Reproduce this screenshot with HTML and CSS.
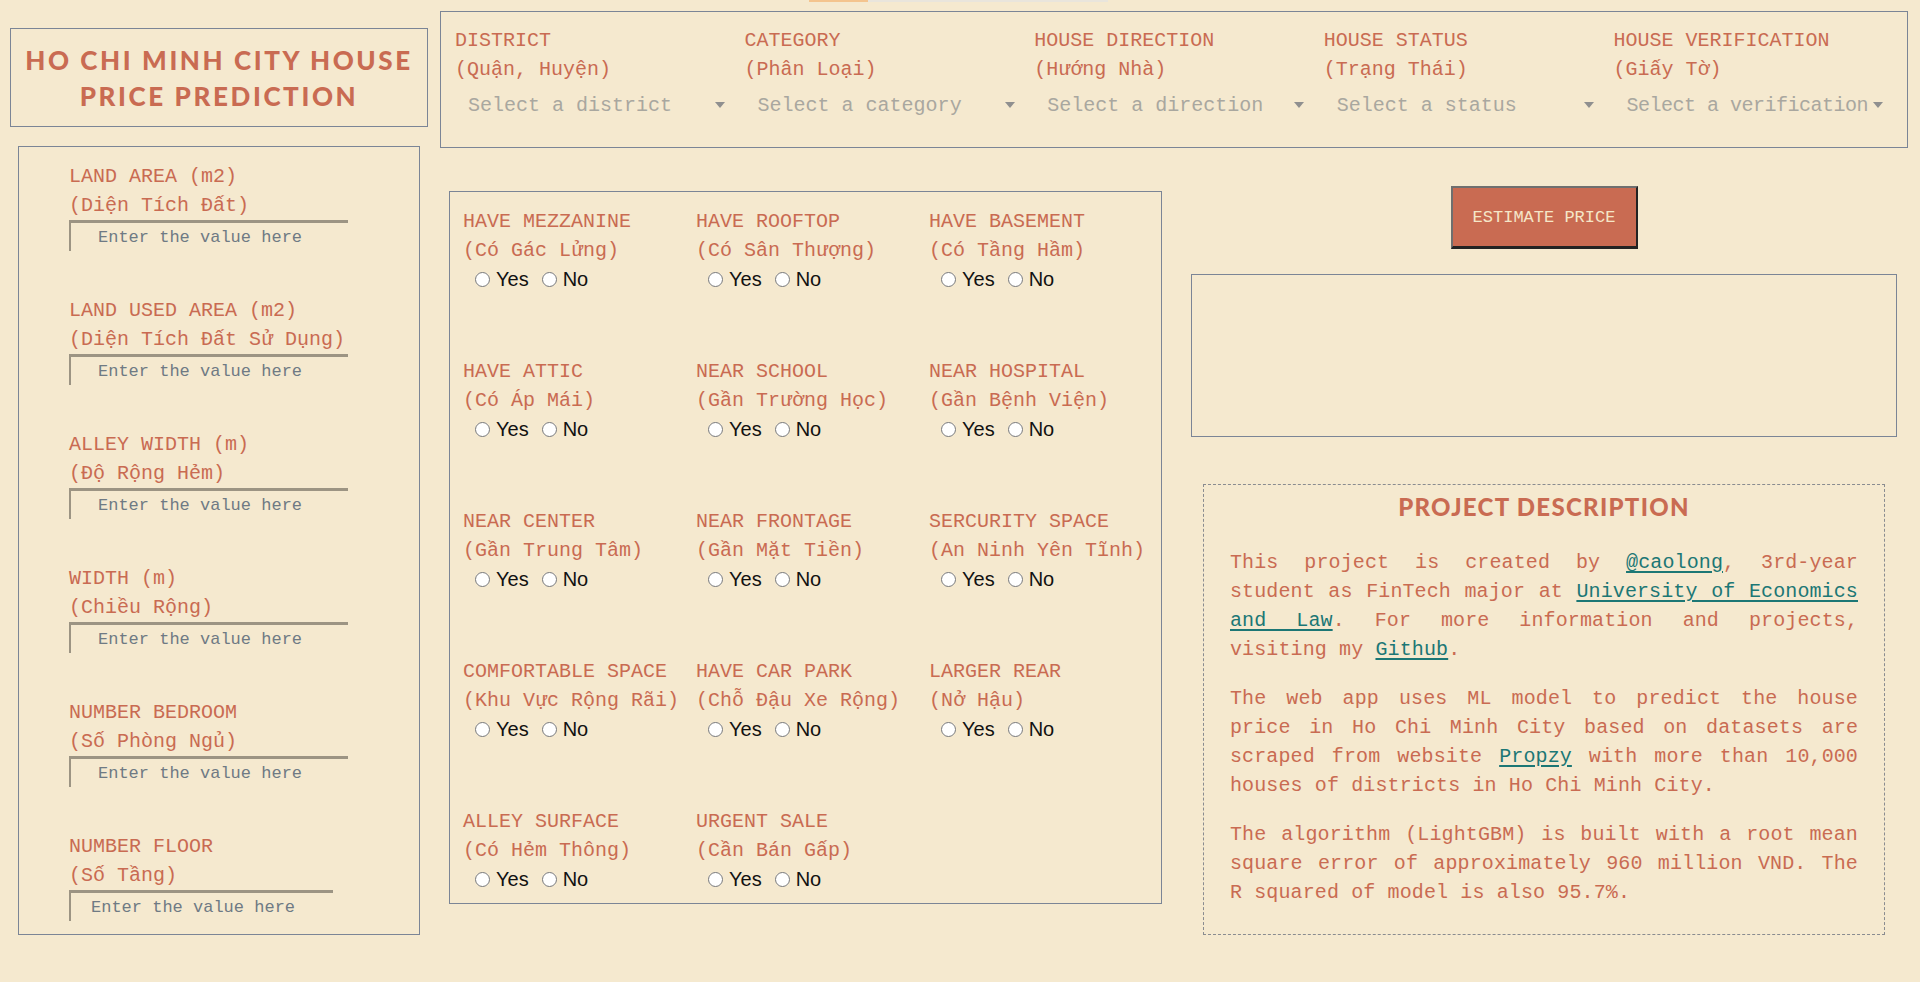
FILE: index.html
```html
<!DOCTYPE html>
<html lang="vi">
<head>
<meta charset="utf-8">
<title>Ho Chi Minh City House Price Prediction</title>
<link rel="stylesheet" href="styles.css">
</head>
<body>
<div class="topbar"><span class="tb-orange"></span><span class="tb-gray"></span></div>
<div class="page">
  <aside class="left">
    <div class="title-box"><h1 class="title">HO CHI MINH CITY HOUSE<br>PRICE PREDICTION</h1></div>
    <div class="inputs-box">
      <div class="field">
        <div class="label">LAND AREA (m2)<br>(Diện Tích Đất)</div>
        <input class="num" type="text" placeholder="Enter the value here">
      </div>
      <div class="field">
        <div class="label">LAND USED AREA (m2)<br>(Diện Tích Đất Sử Dụng)</div>
        <input class="num" type="text" placeholder="Enter the value here">
      </div>
      <div class="field">
        <div class="label">ALLEY WIDTH (m)<br>(Độ Rộng Hẻm)</div>
        <input class="num" type="text" placeholder="Enter the value here">
      </div>
      <div class="field">
        <div class="label">WIDTH (m)<br>(Chiều Rộng)</div>
        <input class="num" type="text" placeholder="Enter the value here">
      </div>
      <div class="field">
        <div class="label">NUMBER BEDROOM<br>(Số Phòng Ngủ)</div>
        <input class="num" type="text" placeholder="Enter the value here">
      </div>
      <div class="field">
        <div class="label">NUMBER FLOOR<br>(Số Tầng)</div>
        <input class="num num-short" type="text" placeholder="Enter the value here">
      </div>
    </div>
  </aside>

  <main class="main">
    <div class="dropdown-box">
      <div class="dd">
        <div class="label">DISTRICT<br>(Quận, Huyện)</div>
        <div class="select"><span class="ph">Select a district</span><span class="caret"></span></div>
      </div>
      <div class="dd">
        <div class="label">CATEGORY<br>(Phân Loại)</div>
        <div class="select"><span class="ph">Select a category</span><span class="caret"></span></div>
      </div>
      <div class="dd">
        <div class="label">HOUSE DIRECTION<br>(Hướng Nhà)</div>
        <div class="select"><span class="ph">Select a direction</span><span class="caret"></span></div>
      </div>
      <div class="dd">
        <div class="label">HOUSE STATUS<br>(Trạng Thái)</div>
        <div class="select"><span class="ph">Select a status</span><span class="caret"></span></div>
      </div>
      <div class="dd">
        <div class="label">HOUSE VERIFICATION<br>(Giấy Tờ)</div>
        <div class="select"><span class="ph ph-tight">Select a verification</span><span class="caret"></span></div>
      </div>
    </div>

    <div class="lower">
      <div class="radio-box">
        <div class="opt"><div class="label">HAVE MEZZANINE<br>(Có Gác Lửng)</div><div class="radios"><input type="radio" name="r1"><span>Yes</span><input type="radio" name="r1"><span>No</span></div></div>
        <div class="opt"><div class="label">HAVE ROOFTOP<br>(Có Sân Thượng)</div><div class="radios"><input type="radio" name="r2"><span>Yes</span><input type="radio" name="r2"><span>No</span></div></div>
        <div class="opt"><div class="label">HAVE BASEMENT<br>(Có Tầng Hầm)</div><div class="radios"><input type="radio" name="r3"><span>Yes</span><input type="radio" name="r3"><span>No</span></div></div>
        <div class="opt"><div class="label">HAVE ATTIC<br>(Có Áp Mái)</div><div class="radios"><input type="radio" name="r4"><span>Yes</span><input type="radio" name="r4"><span>No</span></div></div>
        <div class="opt"><div class="label">NEAR SCHOOL<br>(Gần Trường Học)</div><div class="radios"><input type="radio" name="r5"><span>Yes</span><input type="radio" name="r5"><span>No</span></div></div>
        <div class="opt"><div class="label">NEAR HOSPITAL<br>(Gần Bệnh Viện)</div><div class="radios"><input type="radio" name="r6"><span>Yes</span><input type="radio" name="r6"><span>No</span></div></div>
        <div class="opt"><div class="label">NEAR CENTER<br>(Gần Trung Tâm)</div><div class="radios"><input type="radio" name="r7"><span>Yes</span><input type="radio" name="r7"><span>No</span></div></div>
        <div class="opt"><div class="label">NEAR FRONTAGE<br>(Gần Mặt Tiền)</div><div class="radios"><input type="radio" name="r8"><span>Yes</span><input type="radio" name="r8"><span>No</span></div></div>
        <div class="opt"><div class="label">SERCURITY SPACE<br>(An Ninh Yên Tĩnh)</div><div class="radios"><input type="radio" name="r9"><span>Yes</span><input type="radio" name="r9"><span>No</span></div></div>
        <div class="opt"><div class="label">COMFORTABLE SPACE<br>(Khu Vực Rộng Rãi)</div><div class="radios"><input type="radio" name="r10"><span>Yes</span><input type="radio" name="r10"><span>No</span></div></div>
        <div class="opt"><div class="label">HAVE CAR PARK<br>(Chỗ Đậu Xe Rộng)</div><div class="radios"><input type="radio" name="r11"><span>Yes</span><input type="radio" name="r11"><span>No</span></div></div>
        <div class="opt"><div class="label">LARGER REAR<br>(Nở Hậu)</div><div class="radios"><input type="radio" name="r12"><span>Yes</span><input type="radio" name="r12"><span>No</span></div></div>
        <div class="opt"><div class="label">ALLEY SURFACE<br>(Có Hẻm Thông)</div><div class="radios"><input type="radio" name="r13"><span>Yes</span><input type="radio" name="r13"><span>No</span></div></div>
        <div class="opt"><div class="label">URGENT SALE<br>(Cần Bán Gấp)</div><div class="radios"><input type="radio" name="r14"><span>Yes</span><input type="radio" name="r14"><span>No</span></div></div>
      </div>

      <div class="right-col">
        <button class="estimate" type="button">ESTIMATE PRICE</button>
        <div class="output"></div>
        <div class="desc">
          <h2 class="desc-title">PROJECT DESCRIPTION</h2>
          <p>This project is created by <a href="#">@caolong</a>, 3rd-year student as FinTech major at <a href="#">University of Economics and Law</a>. For more information and projects, visiting my <a href="#">Github</a>.</p>
          <p>The web app uses ML model to predict the house price in Ho Chi Minh City based on datasets are scraped from website <a href="#">Propzy</a> with more than 10,000 houses of districts in Ho Chi Minh City.</p>
          <p>The algorithm (LightGBM) is built with a root mean square error of approximately 960 million VND. The R squared of model is also 95.7%.</p>
        </div>
      </div>
    </div>
  </main>
</div>
</body>
</html>
```

FILE: styles.css
```css
* { box-sizing: border-box; }

html, body {
  margin: 0;
  padding: 0;
  background: #f5e9cf;
}

body {
  font-family: "Liberation Mono", "DejaVu Sans Mono", monospace;
  color: #c96b52;
  position: relative;
  min-height: 982px;
}

.topbar {
  position: absolute;
  top: 0;
  left: 809px;
  display: flex;
  height: 2px;
}
.tb-orange { width: 59px; background: #f4c48e; }
.tb-gray { width: 240px; background: #e9e5dc; }

.page {
  display: flex;
  align-items: flex-start;
}

/* ---------- left column ---------- */
.left {
  width: 418px;
  margin-left: 10px;
  display: flex;
  flex-direction: column;
}

.title-box {
  margin-top: 28px;
  border: 1px solid #7b8596;
  padding: 13px 0 12px;
  text-align: center;
}

.title {
  margin: 0;
  font-family: "Lato", "Open Sans", sans-serif;
  font-weight: 900;
  font-size: 26px;
  line-height: 36px;
  letter-spacing: 2.6px;
  color: #c96b52;
}

.inputs-box {
  margin: 19px 8px 0;
  border: 1px solid #7b8596;
  padding: 15px 0 13px 50px;
  display: flex;
  flex-direction: column;
  gap: 45px;
}

.label {
  font-size: 20px;
  line-height: 29px;
  white-space: nowrap;
  color: #c96b52;
}

.num {
  display: block;
  width: 279px;
  height: 31px;
  margin: 0;
  padding: 0 0 0 27px;
  background: transparent;
  border: none;
  border-top: 3px solid #9c9483;
  border-left: 2px solid #9c9483;
  font-family: "Liberation Mono", "DejaVu Sans Mono", monospace;
  font-size: 17px;
  color: #5f6b75;
  outline: none;
}
.num::placeholder { color: #6f7a84; opacity: 1; }
.num-short { width: 264px; padding-left: 20px; }

/* ---------- main ---------- */
.main {
  width: 1468px;
  margin-left: 12px;
  display: flex;
  flex-direction: column;
}

.dropdown-box {
  margin-top: 11px;
  height: 137px;
  border: 1px solid #7b8596;
  padding: 14px 4px 0 14px;
  display: grid;
  grid-template-columns: repeat(5, 1fr);
}

.select {
  width: 276px;
  height: 44px;
  padding: 0 6px 2px 13px;
  display: flex;
  align-items: center;
  justify-content: space-between;
}
.ph {
  font-size: 20px;
  line-height: 29px;
  color: #a9a79f;
  white-space: nowrap;
}
.ph-tight { letter-spacing: -0.5px; }
.caret {
  width: 0;
  height: 0;
  border-left: 5px solid transparent;
  border-right: 5px solid transparent;
  border-top: 6px solid #8f8f8f;
  flex: none;
}

.lower {
  display: flex;
  align-items: flex-start;
}

.radio-box {
  margin: 43px 0 0 9px;
  width: 713px;
  border: 1px solid #7b8596;
  padding: 15px 0 10px 13px;
  display: grid;
  grid-template-columns: repeat(3, 233px);
  row-gap: 64px;
}

.radios {
  display: flex;
  align-items: center;
  height: 28px;
  padding-left: 12px;
  font-family: "Liberation Sans", Arial, sans-serif;
  font-size: 20px;
  color: #111;
}
.radios input {
  width: 15px;
  height: 15px;
  margin: 0 6px 0 0;
}
.radios span + input { margin-left: 13px; }

/* ---------- right column ---------- */
.right-col {
  width: 728px;
  margin-left: 18px;
  display: flex;
  flex-direction: column;
  align-items: center;
}

.estimate {
  margin-top: 38px;
  width: 187px;
  height: 63px;
  background: #c96b52;
  color: #f5e6c8;
  font-family: "Liberation Mono", "DejaVu Sans Mono", monospace;
  font-size: 17px;
  border-top: 2px solid #6f6f6f;
  border-left: 2px solid #6f6f6f;
  border-right: 2px solid #232323;
  border-bottom: 3px solid #232323;
  padding: 0;
  cursor: pointer;
}

.output {
  margin-top: 25px;
  width: 706px;
  height: 163px;
  border: 1px solid #7b8596;
}

.desc {
  margin-top: 47px;
  width: 682px;
  height: 451px;
  border: 1px dashed #8a8c90;
  padding: 7px 26px 0 26px;
}

.desc-title {
  margin: 0 0 26px;
  text-align: center;
  font-family: "Lato", "Open Sans", sans-serif;
  font-weight: 900;
  font-size: 24px;
  line-height: 30px;
  letter-spacing: 1.3px;
  color: #c96b52;
}

.desc p {
  margin: 0 0 20px;
  font-size: 20px;
  line-height: 29px;
  letter-spacing: 0.12px;
  text-align: justify;
}

.desc a {
  color: #1c7775;
  text-decoration: underline;
  text-decoration-thickness: 2px;
  text-underline-offset: 3px;
}
```
